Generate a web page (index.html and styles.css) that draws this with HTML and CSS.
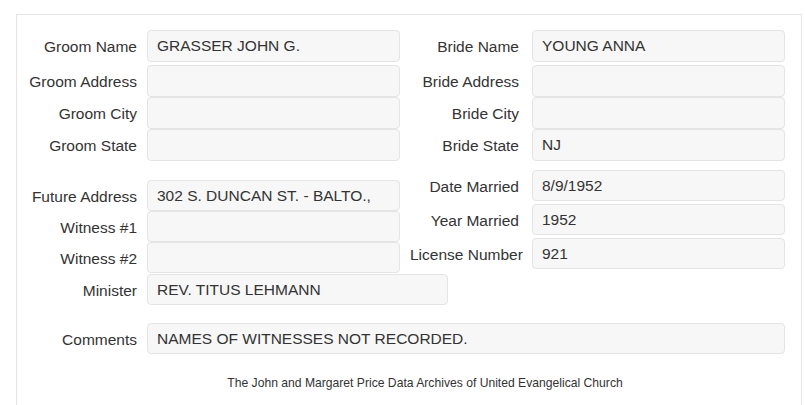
FILE: index.html
```html
<!DOCTYPE html>
<html>
<head>
<meta charset="utf-8">
<link rel="stylesheet" href="styles.css">
</head>
<body>
<div class="card">
  <div class="sec sec1">
    <div class="col">
      <div class="field first"><label class="lbl">Groom Name</label><div class="inp">GRASSER JOHN G.</div></div>
      <div class="field"><label class="lbl">Groom Address</label><div class="inp"></div></div>
      <div class="field"><label class="lbl">Groom City</label><div class="inp"></div></div>
      <div class="field"><label class="lbl">Groom State</label><div class="inp"></div></div>
    </div>
    <div class="col right">
      <div class="field first"><label class="lbl">Bride Name</label><div class="inp">YOUNG ANNA</div></div>
      <div class="field"><label class="lbl">Bride Address</label><div class="inp"></div></div>
      <div class="field"><label class="lbl">Bride City</label><div class="inp"></div></div>
      <div class="field"><label class="lbl">Bride State</label><div class="inp">NJ</div></div>
    </div>
  </div>
  <div class="sec sec2">
    <div class="col left2">
      <div class="field"><label class="lbl">Future Address</label><div class="inp">302 S. DUNCAN ST. - BALTO.,</div></div>
      <div class="field"><label class="lbl">Witness #1</label><div class="inp"></div></div>
      <div class="field"><label class="lbl">Witness #2</label><div class="inp"></div></div>
      <div class="field minister"><label class="lbl">Minister</label><div class="inp">REV. TITUS LEHMANN</div></div>
    </div>
    <div class="col right right2">
      <div class="field"><label class="lbl">Date Married</label><div class="inp">8/9/1952</div></div>
      <div class="field"><label class="lbl">Year Married</label><div class="inp">1952</div></div>
      <div class="field"><label class="lbl">License Number</label><div class="inp">921</div></div>
    </div>
  </div>
  <div class="field comments"><label class="lbl">Comments</label><div class="inp">NAMES OF WITNESSES NOT RECORDED.</div></div>
  <p class="footer">The John and Margaret Price Data Archives of United Evangelical Church</p>
</div>
</body>
</html>
```

FILE: styles.css
```css
html, body {
  margin: 0;
  padding: 0;
  background: #ffffff;
}
body {
  font-family: "Liberation Sans", Arial, sans-serif;
  color: #333333;
  font-size: 15.5px;
}
.card {
  margin: 14px 3px 0 16px;
  border: 1px solid #e6e6e6;
  border-bottom: none;
  height: 391px;
  padding: 15px 16px 0 0;
  box-sizing: border-box;
  overflow: hidden;
}
.sec {
  display: grid;
  grid-template-columns: 383px 385px;
}
.col {
  display: flex;
  flex-direction: column;
}
.field {
  display: flex;
  align-items: center;
  height: 32px;
}
.sec1 .field.first {
  margin-bottom: 3px;
}
.lbl {
  box-sizing: border-box;
  width: 130px;
  flex: none;
  padding: 2px 10px 0 11px;
  text-align: right;
  white-space: nowrap;
}
.right .lbl {
  width: 132px;
  padding: 2px 13px 0 10px;
}
.inp {
  flex: 1;
  align-self: stretch;
  box-sizing: border-box;
  background: #f7f7f7;
  border: 1px solid #e4e4e4;
  border-radius: 4px;
  padding: 0 9px;
  display: flex;
  align-items: center;
  white-space: nowrap;
  overflow: hidden;
}
.sec2 {
  margin-top: 9px;
}
.sec2 .field {
  height: 31px;
}
.left2 {
  padding-top: 10px;
}
.right2 {
  gap: 3px;
}
.minister .inp {
  flex: none;
  width: 301px;
}
.minister {
  margin-top: 1px;
}
.comments {
  margin-top: 18px;
  height: 31px;
}
.footer {
  margin: 21px 0 0 48px;
  font-size: 12.15px;
  line-height: 16px;
  text-align: center;
  color: #333333;
}
```
